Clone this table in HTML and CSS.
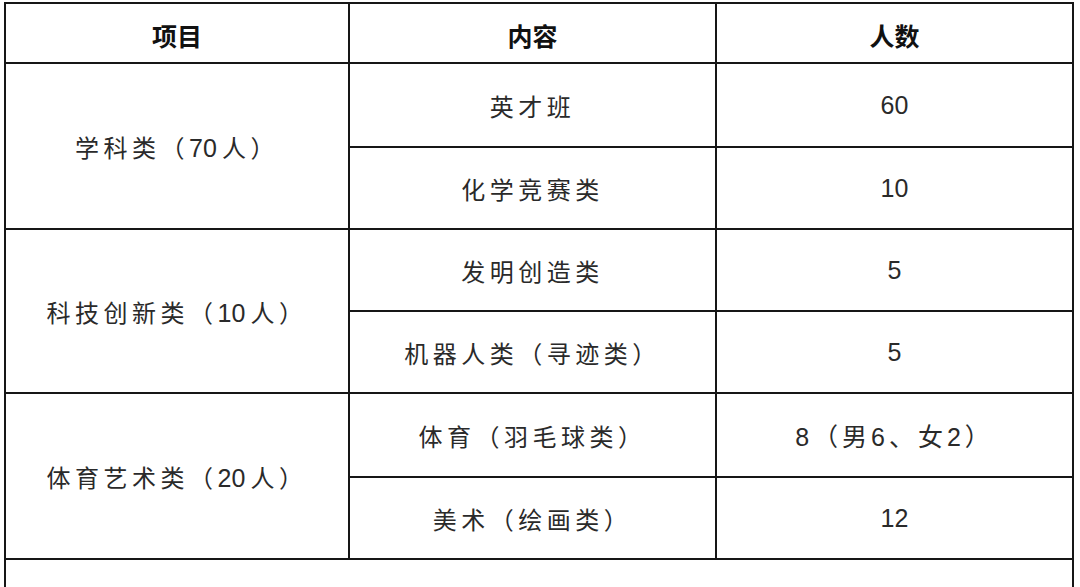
FILE: index.html
```html
<!DOCTYPE html>
<html lang="zh-CN">
<head>
<meta charset="utf-8">
<title>名额分配表</title>
<link rel="stylesheet" href="styles.css">
</head>
<body>
<table class="quota">
  <colgroup>
    <col class="c-item">
    <col class="c-content">
    <col class="c-count">
  </colgroup>
  <thead>
    <tr class="head-row">
      <th>项目</th>
      <th>内容</th>
      <th>人数</th>
    </tr>
  </thead>
  <tbody>
    <tr class="row r-first">
      <td rowspan="2" class="item">学科类（<span class="num">70</span>人）</td>
      <td class="content">英才班</td>
      <td class="count">60</td>
    </tr>
    <tr class="row">
      <td class="content">化学竞赛类</td>
      <td class="count">10</td>
    </tr>
    <tr class="row">
      <td rowspan="2" class="item">科技创新类（<span class="num">10</span>人）</td>
      <td class="content">发明创造类</td>
      <td class="count">5</td>
    </tr>
    <tr class="row">
      <td class="content">机器人类（寻迹类）</td>
      <td class="count">5</td>
    </tr>
    <tr class="row r-tall">
      <td rowspan="2" class="item">体育艺术类（<span class="num">20</span>人）</td>
      <td class="content">体育（羽毛球类）</td>
      <td class="count mixed">8（男6、女2）</td>
    </tr>
    <tr class="row">
      <td class="content">美术（绘画类）</td>
      <td class="count">12</td>
    </tr>
    <tr class="row foot-row">
      <td colspan="3" class="foot">合计：100人</td>
    </tr>
  </tbody>
</table>
</body>
</html>
```

FILE: styles.css
```css
html, body {
  margin: 0;
  padding: 0;
  background: #ffffff;
}

body {
  font-family: "Liberation Sans", "Noto Sans CJK SC", sans-serif;
  color: #262626;
  overflow: hidden;
}

.quota {
  border-collapse: collapse;
  table-layout: fixed;
  width: 1068px;
  margin: 2px 0 0 4px;
}

.c-item { width: 344px; }
.c-content { width: 367px; }
.c-count { width: 357px; }

.quota th,
.quota td {
  border: 2px solid #161616;
  padding: 0;
  text-align: center;
  vertical-align: middle;
}

.head-row th {
  height: 55px;
  font-family: "Noto Sans CJK SC", sans-serif;
  font-weight: 700;
  font-size: 25px;
  color: #111;
  padding-top: 3px;
}

.row td {
  height: 80px;
}

.r-first td {
  height: 81px;
  padding-top: 1px;
}

.r-tall td {
  height: 82px;
}

.item,
.content {
  font-size: 24px;
  letter-spacing: 4.5px;
  color: #2a2a2a;
}

.item {
  padding-right: 6px;
}

.content {
  padding-left: 2px;
}

.num {
  font-size: 25px;
  letter-spacing: 0;
  margin-right: 5px;
}

.count {
  font-size: 25px;
  color: #2a2a2a;
}

.mixed {
  letter-spacing: 4px;
}

.foot {
  vertical-align: top;
  padding-top: 26px;
  font-size: 24px;
  letter-spacing: 4.5px;
  padding-right: 20px;
}
```
